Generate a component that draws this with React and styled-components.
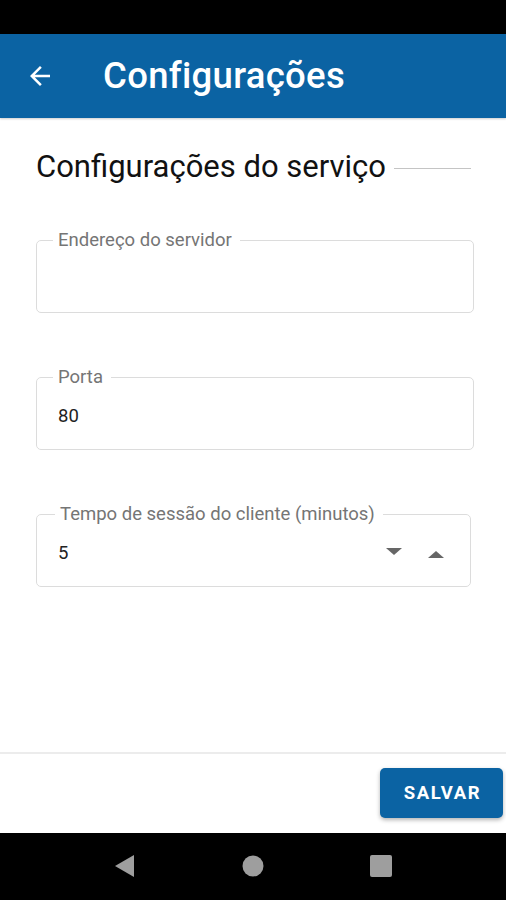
import styled, { createGlobalStyle } from 'styled-components';

const Global = createGlobalStyle`
	* { box-sizing: border-box; }
	html, body { margin: 0; padding: 0; background: #fff; }
	body { font-family: Roboto, "Noto Sans", sans-serif; }
`;

const Screen = styled.div`
	width: 506px;
	height: 900px;
	display: flex;
	flex-direction: column;
	background: #fff;
`;
const StatusBar = styled.div`
	height: 34px;
	background: #000;
`;
const AppBar = styled.header`
	height: 84px;
	background: #0b63a3;
	display: flex;
	align-items: center;
	padding: 0 0 0 25px;
	box-shadow: 0 1px 2px rgba(0, 0, 0, 0.2);
	position: relative;
	z-index: 1;
`;
const BackButton = styled.button`
	border: none;
	background: none;
	padding: 0;
	width: 30px;
	height: 30px;
	display: flex;
	align-items: center;
	justify-content: center;
	margin-right: 48px;
`;
const Title = styled.h1`
	margin: 0 0 2px;
	color: #fff;
	font-size: 36.5px;
	font-weight: 500;
	letter-spacing: 0.3px;
`;
const Content = styled.main`
	flex: 1;
	padding: 31px 32px 0 36px;
	display: flex;
	flex-direction: column;
`;
const SectionHeader = styled.div`
	display: flex;
	align-items: center;
	gap: 8px;
	margin-bottom: 45px;
	h2 {
		margin: 0;
		font-size: 31px;
		line-height: 36px;
		font-weight: 400;
		color: #111;
	}
	hr {
		flex: 1;
		margin: 2px 3px 0 0;
		border: none;
		border-top: 1px solid #c4c4c4;
	}
`;
const Field = styled.fieldset`
	margin: 0 ${(p) => p.$inset || 0}px 54px 0;
	padding: 0 20px 0 16px;
	border: 1px solid #dcdcdc;
	border-radius: 5px;
	min-width: 0;
	legend {
		padding: 0 8px 0 5px;
		font-size: 18.5px;
		line-height: 20px;
		color: #757575;
		margin-left: ${(p) => (p.$inset ? 2 : 0)}px;
	}
`;
const Value = styled.div`
	height: 62px;
	display: flex;
	align-items: center;
	padding: 0 0 4px 5px;
	font-size: 18.5px;
	color: #222;
	span { flex: 1; }
`;
const Spinner = styled.div`
	display: flex;
	align-items: center;
	gap: 26px;
	margin-right: 6px;
`;
const Arrow = styled.i`
	width: 0;
	height: 0;
	border-left: 8px solid transparent;
	border-right: 8px solid transparent;
	${(p) => (p.$up ? 'border-bottom: 7px solid #666; margin-top: 2px;' : 'border-top: 7px solid #666; margin-top: -3px;')}
`;
const Footer = styled.footer`
	height: 81px;
	border-top: 2px solid #ececec;
	display: flex;
	justify-content: flex-end;
	align-items: flex-start;
	padding: 14px 3px 0 0;
`;
const SaveButton = styled.button`
	width: 123px;
	height: 50px;
	border: none;
	border-radius: 5px;
	background: #0b63a3;
	color: #fff;
	font-family: Roboto, sans-serif;
	font-size: 18.5px;
	font-weight: 700;
	letter-spacing: 1.6px;
	padding: 0 0 0 2px;
	box-shadow: 0 2px 4px rgba(0, 0, 0, 0.3);
`;
const NavBar = styled.nav`
	height: 67px;
	background: #000;
	display: flex;
	align-items: center;
	justify-content: center;
	gap: 106px;
	padding: 0 0 2px 0;
`;

const OutlinedField = ({ label, value, inset, spinner }) => (
	<Field $inset={inset}>
		<legend>{label}</legend>
		<Value>
			<span>{value}</span>
			{spinner && (
				<Spinner>
					<Arrow />
					<Arrow $up />
				</Spinner>
			)}
		</Value>
	</Field>
);

const App = () => {
	return (
		<Screen>
			<Global />
			<StatusBar />
			<AppBar>
				<BackButton aria-label="Voltar">
					<svg width="30" height="30" viewBox="0 0 24 24">
						<path d="M20 11H7.83l5.59-5.59L12 4l-8 8 8 8 1.41-1.41L7.83 13H20v-2z" fill="#fff" />
					</svg>
				</BackButton>
				<Title>Configurações</Title>
			</AppBar>
			<Content>
				<SectionHeader>
					<h2>Configurações do serviço</h2>
					<hr />
				</SectionHeader>
				<OutlinedField label="Endereço do servidor" value="" />
				<OutlinedField label="Porta" value="80" />
				<OutlinedField label="Tempo de sessão do cliente (minutos)" value="5" inset={3} spinner />
			</Content>
			<Footer>
				<SaveButton>SALVAR</SaveButton>
			</Footer>
			<NavBar>
				<svg width="22" height="24" viewBox="0 0 22 24">
					<path d="M20 1 L20 23 L1 12 Z" fill="#9e9e9e" />
				</svg>
				<svg width="22" height="22" viewBox="0 0 22 22">
					<circle cx="11" cy="11" r="10.5" fill="#9e9e9e" />
				</svg>
				<svg width="22" height="22" viewBox="0 0 22 22">
					<rect x="0" y="0" width="22" height="22" rx="2" fill="#9e9e9e" />
				</svg>
			</NavBar>
		</Screen>
	);
};

export default App;
